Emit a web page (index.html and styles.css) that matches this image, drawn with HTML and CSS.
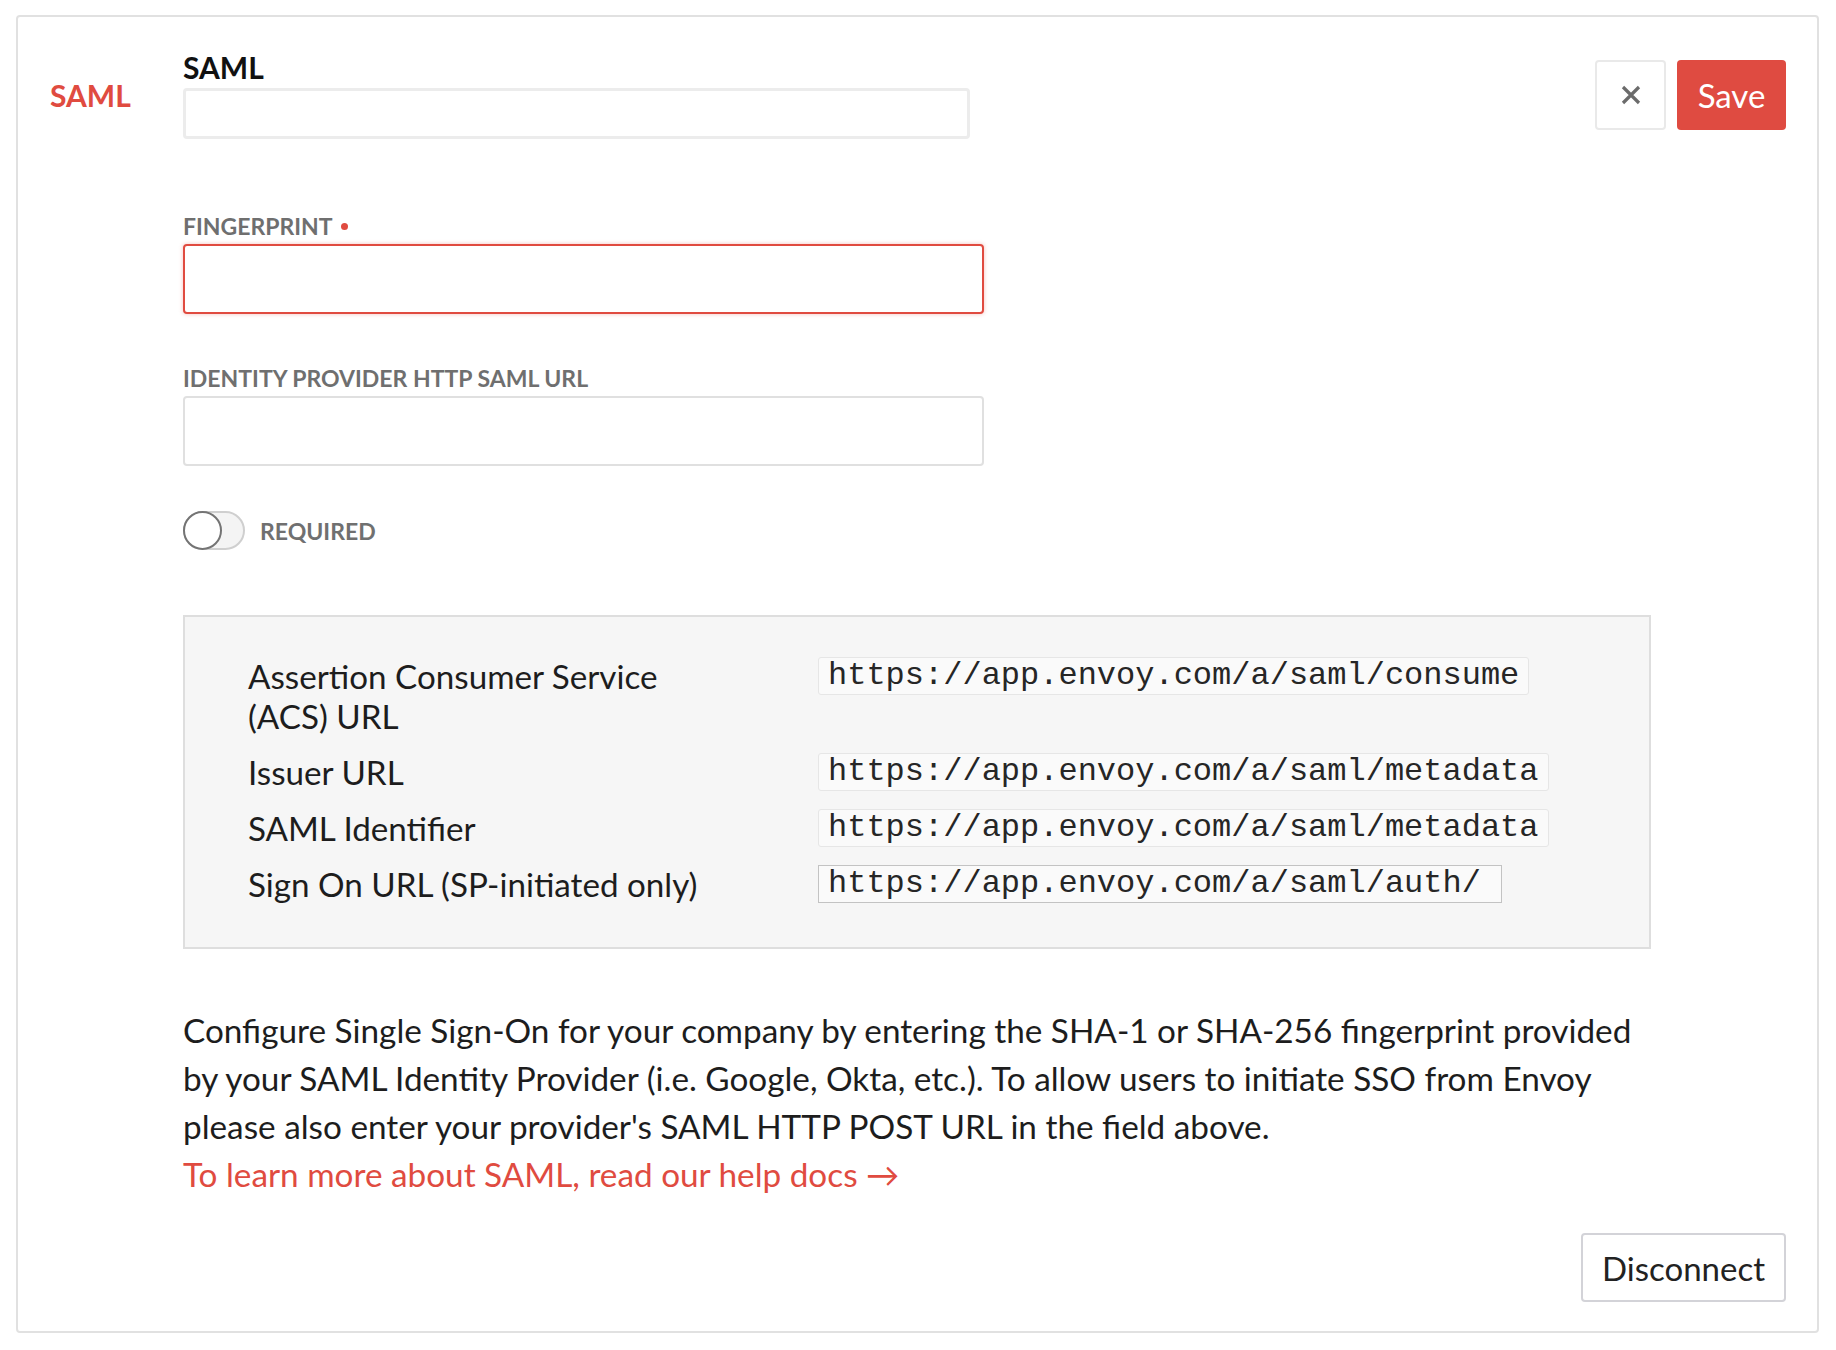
FILE: index.html
```html
<!DOCTYPE html>
<html lang="en">
<head>
<meta charset="utf-8">
<title>SAML</title>
<link rel="stylesheet" href="styles.css">
</head>
<body>
<div class="card">
  <div class="logo-col"><span class="logo">SAML</span></div>
  <div class="main">
    <div class="header">
      <div class="title-block">
        <h1 class="title">SAML</h1>
        <div class="title-input"></div>
      </div>
      <div class="actions">
        <button class="btn-close" type="button" aria-label="Close">
          <svg width="20" height="20" viewBox="0 0 20 20"><path d="M2 2 L18 18 M18 2 L2 18" stroke="#6b6b6b" stroke-width="3.2" fill="none"/></svg>
        </button>
        <button class="btn-save" type="button">Save</button>
      </div>
    </div>

    <div class="field field-first">
      <div class="field-label">FINGERPRINT <span class="req-dot"></span></div>
      <div class="text-input text-input-error"></div>
    </div>

    <div class="field">
      <div class="field-label">IDENTITY PROVIDER HTTP SAML URL</div>
      <div class="text-input"></div>
    </div>

    <div class="toggle-row">
      <span class="toggle"><span class="toggle-knob"></span></span>
      <span class="toggle-label">REQUIRED</span>
    </div>

    <div class="info-box">
      <div class="info-label">Assertion Consumer Service (ACS) URL</div>
      <div class="info-value"><code class="code">https://app.envoy.com/a/saml/consume</code></div>
      <div class="info-label">Issuer URL</div>
      <div class="info-value"><code class="code">https://app.envoy.com/a/saml/metadata</code></div>
      <div class="info-label">SAML Identifier</div>
      <div class="info-value"><code class="code">https://app.envoy.com/a/saml/metadata</code></div>
      <div class="info-label">Sign On URL (SP-initiated only)</div>
      <div class="info-value"><code class="code code-input">https://app.envoy.com/a/saml/auth/</code></div>
    </div>

    <p class="description">Configure Single Sign-On for your company by entering the SHA-1 or SHA-256 fingerprint provided by your SAML Identity Provider (i.e. Google, Okta, etc.). To allow users to initiate SSO from Envoy please also enter your provider's SAML HTTP POST URL in the field above.<br><a class="help-link" href="#">To learn more about SAML, read our help docs →</a></p>

    <div class="footer">
      <button class="btn-disconnect" type="button">Disconnect</button>
    </div>
  </div>
</div>
</body>
</html>
```

FILE: styles.css
```css
* { box-sizing: border-box; }
html, body { margin: 0; padding: 0; background: #fff; }
body { font-family: "Lato", "Helvetica Neue", Arial, sans-serif; color: #1d1d1d; }

.card {
  margin: 15px 17px 0 16px;
  height: 1318px;
  border: 2px solid #e1e1e1;
  border-radius: 4px;
  padding: 33px 31px 0 32px;
  display: flex;
  align-items: flex-start;
}
.logo-col { width: 133px; height: 89px; display: flex; align-items: center; flex-shrink: 0; }
.logo { font-size: 30px; font-weight: 700; color: #e04b40; line-height: 1; }
.main { flex: 1; min-width: 0; }

.header { display: flex; align-items: center; height: 89px; }
.title-block { width: 787px; }
.title { margin: 0; font-size: 30px; font-weight: 700; line-height: 34px; color: #111; }
.title-input { margin-top: 4px; height: 51px; border: 3px solid #ececec; border-radius: 4px; background: #fff; }
.actions { margin-left: auto; display: flex; gap: 11px; }
.btn-close {
  width: 71px; height: 70px; border: 2px solid #e9e9e9; border-radius: 4px; background: #fff;
  display: flex; align-items: center; justify-content: center; padding: 0; cursor: pointer;
}
.btn-save {
  width: 109px; height: 70px; border: 0; border-radius: 4px; background: #df4b41; color: #fff;
  font-family: inherit; font-size: 33px; padding: 0; cursor: pointer;
}

.field { margin-top: 52px; }
.field-first { margin-top: 75px; }
.field-label { font-size: 23px; font-weight: 700; color: #6f6f6f; line-height: 24px; display: flex; align-items: center; gap: 8px; }
.req-dot { width: 7px; height: 7px; border-radius: 50%; background: #e04b40; display: inline-block; }
.text-input { margin-top: 6px; width: 801px; height: 70px; border: 2px solid #e0e0e0; border-radius: 4px; background: #fff; }
.text-input-error { border-color: #e04b40; box-shadow: 0 0 4px rgba(224, 75, 64, 0.35); }

.toggle-row { margin-top: 45px; display: flex; align-items: center; gap: 15px; height: 39px; }
.toggle { position: relative; width: 62px; height: 39px; border: 2px solid #cfcfcf; border-radius: 20px; background: #f4f4f4; display: inline-block; }
.toggle-knob { position: absolute; left: -2px; top: -2px; width: 39px; height: 39px; border: 2px solid #747474; border-radius: 50%; background: #fff; }
.toggle-label { font-size: 23px; font-weight: 700; color: #707070; }

.info-box {
  margin-top: 65px; width: 1468px;
  border: 2px solid #dedede; background: #f6f6f6;
  padding: 40px 40px 42px 63px;
  display: grid; grid-template-columns: 470px 1fr; column-gap: 100px; row-gap: 16px;
}
.info-label { font-size: 33.2px; line-height: 40px; color: #1d1d1d; margin: -1px 0 1px; }
.info-value { display: flex; align-items: flex-start; }
.code {
  font-family: "Liberation Mono", "Courier New", monospace; font-size: 32px; line-height: 36px;
  color: #262626; background: #fafafa; border: 1px solid #e6e6e6; border-radius: 3px; padding: 0 9px;
}
.code-input { border-color: #c3c3c3; border-radius: 0; padding-right: 20px; }

.description { margin: 57px 0 0; width: 1468px; font-size: 33.3px; line-height: 48px; color: #1d1d1d; }
.help-link { color: #e04b40; text-decoration: none; }

.footer { margin-top: 35px; display: flex; justify-content: flex-end; }
.btn-disconnect {
  width: 205px; height: 69px; border: 2px solid #d3d3d8; border-radius: 4px; background: #fff; color: #222;
  font-family: inherit; font-size: 33px; padding: 0; cursor: pointer;
}
```
